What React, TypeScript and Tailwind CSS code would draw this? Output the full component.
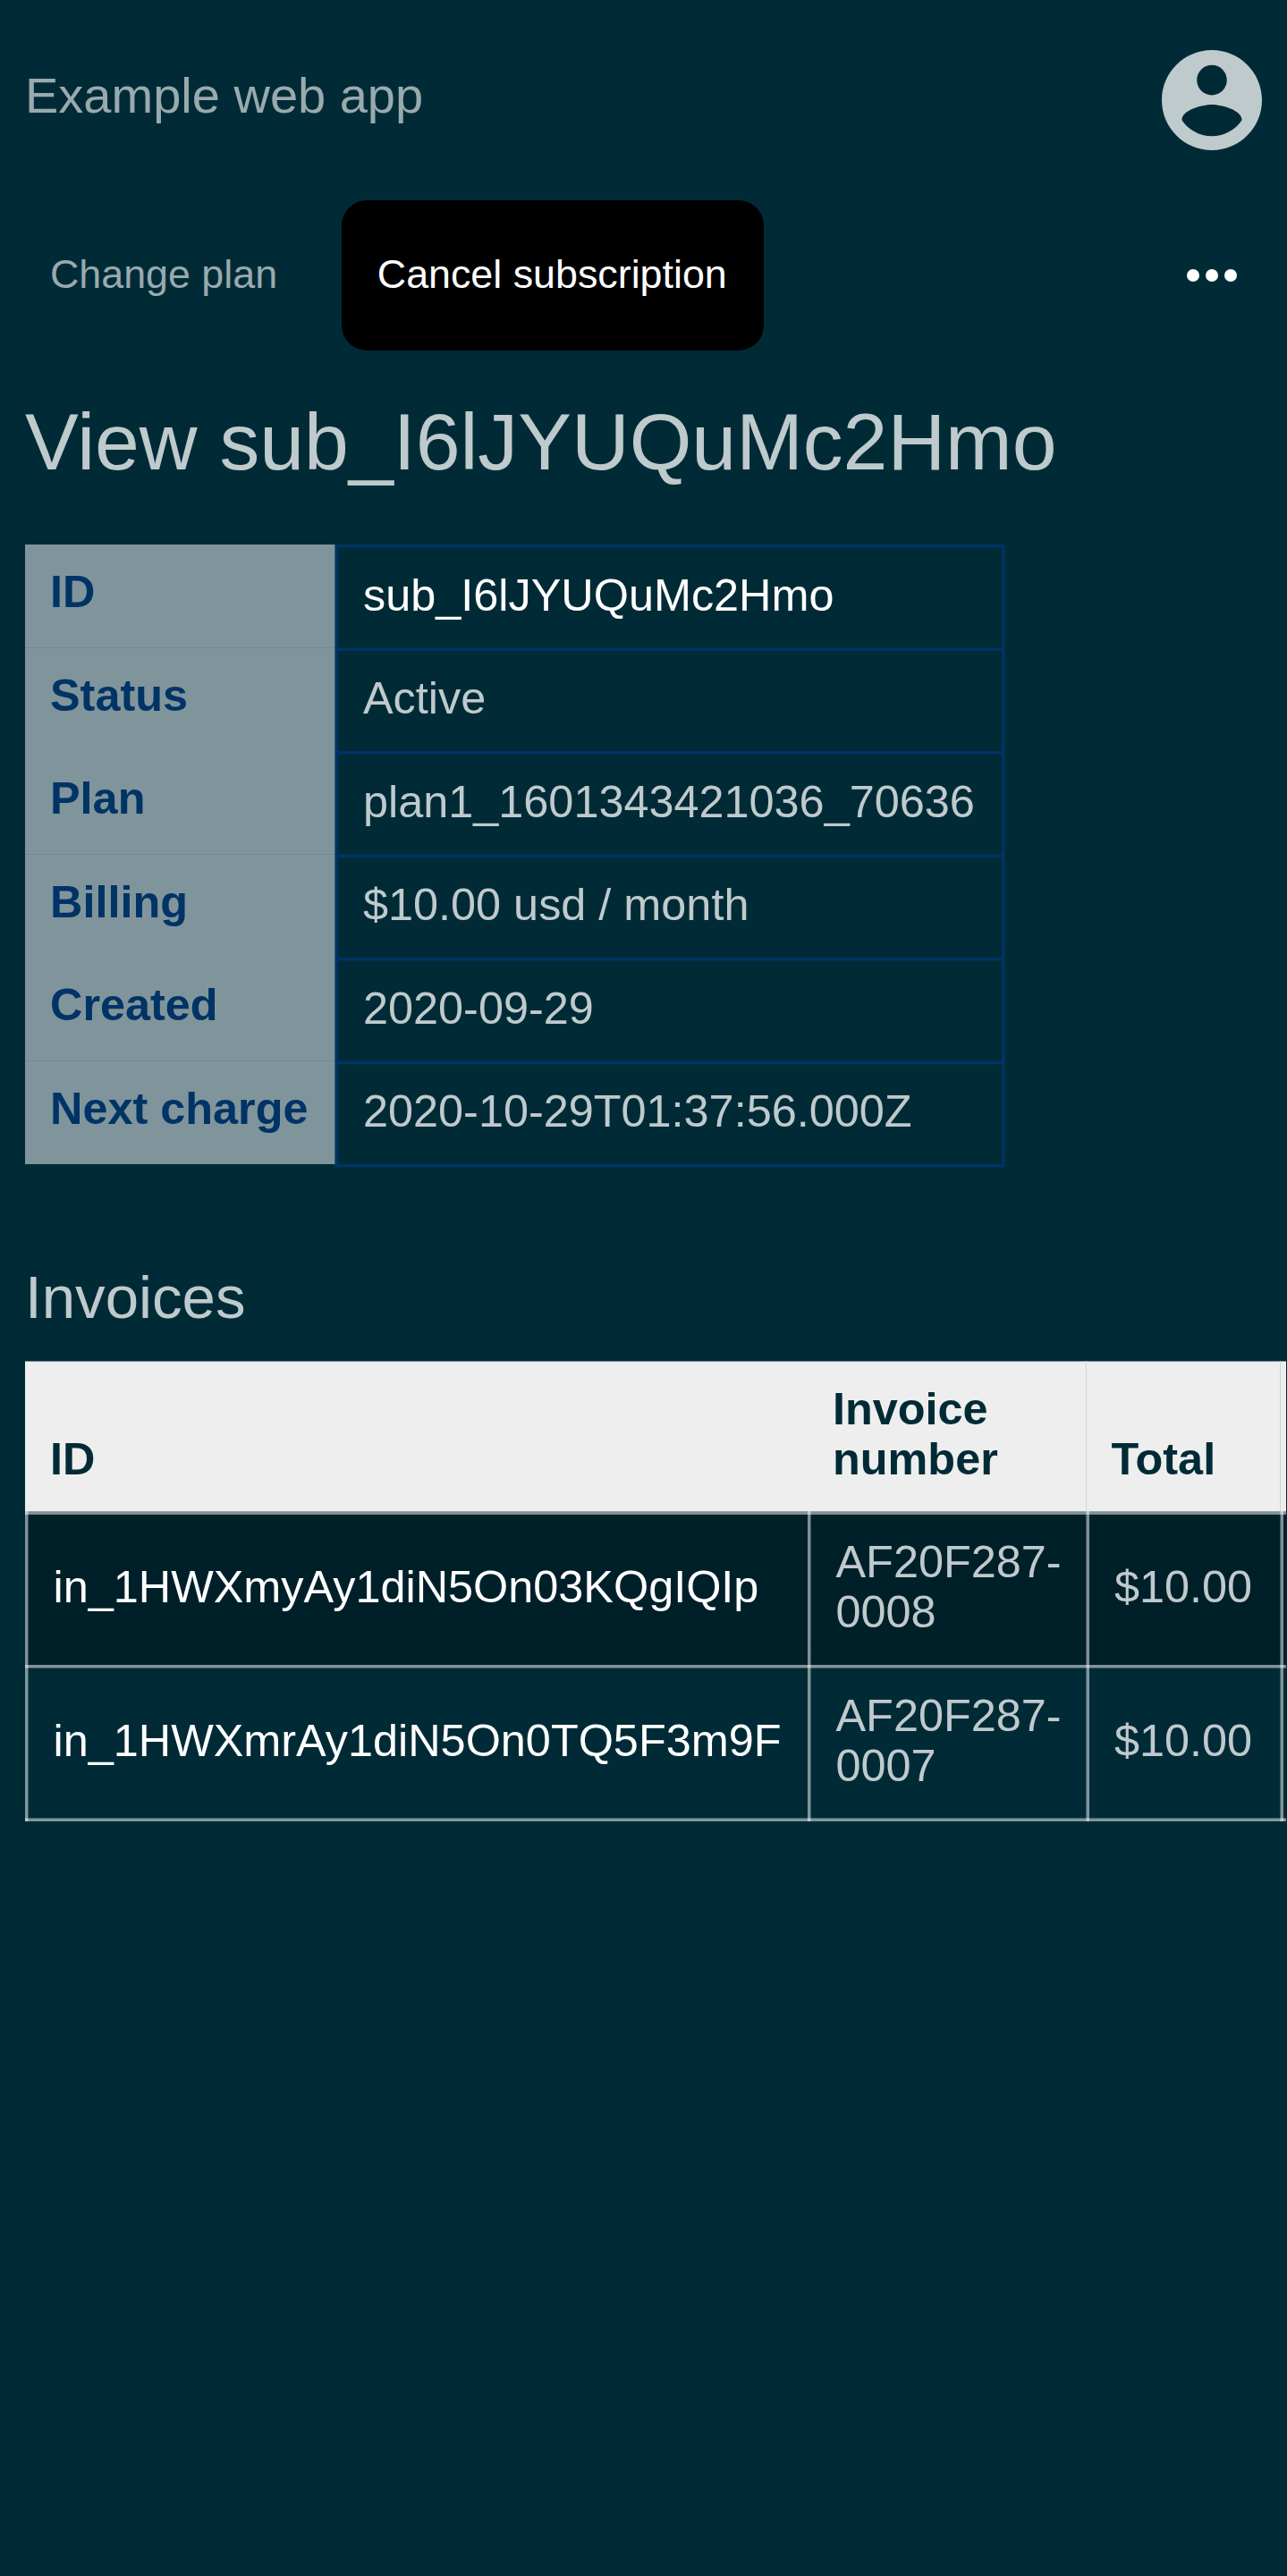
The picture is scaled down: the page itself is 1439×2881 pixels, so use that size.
const details = [
  { label: "ID", value: "sub_I6lJYUQuMc2Hmo", link: true },
  { label: "Status", value: "Active" },
  { label: "Plan", value: "plan1_1601343421036_70636" },
  { label: "Billing", value: "$10.00 usd / month" },
  { label: "Created", value: "2020-09-29" },
  { label: "Next charge", value: "2020-10-29T01:37:56.000Z" },
];

const columns = "grid grid-cols-[875px_311px_217px_7px]";

// Table rules are 3.5px thick: three solid pixels and a half-strength one at the fractional end.
const blueTrailing =
  "bg-[linear-gradient(90deg,#33597a_0_1px,#003366_1px_4px,transparent_4px),linear-gradient(270deg,#002f4e_0_1px,#003366_1px_4px,transparent_4px),linear-gradient(180deg,#003366_0_3px,#002f4e_3px_4px,transparent_4px)]";
const blueLeading =
  "bg-[linear-gradient(90deg,#33597a_0_1px,#003366_1px_4px,transparent_4px),linear-gradient(270deg,#002f4e_0_1px,#003366_1px_4px,transparent_4px),linear-gradient(180deg,#002f4e_0_1px,#003366_1px_4px,transparent_4px)]";

const vTrailing =
  "bg-[linear-gradient(90deg,rgba(255,255,255,0.5)_0_3px,rgba(255,255,255,0.25)_3px_4px,transparent_4px)]";
const vLeading =
  "bg-[linear-gradient(90deg,rgba(255,255,255,0.25)_0_1px,rgba(255,255,255,0.5)_1px_4px,transparent_4px)]";

const invoices = [
  {
    id: "in_1HWXmyAy1diN5On03KQgIQIp",
    number: ["AF20F287-", "0008"],
    total: "$10.00",
    row: "h-[172px] bg-[linear-gradient(180deg,rgba(255,255,255,0.25)_0_1px,rgba(255,255,255,0.5)_1px_4px,transparent_4px),linear-gradient(180deg,#748488_0_1px,#002029_1px)]",
    pad: "pt-[4px] pb-[7px]",
  },
  {
    id: "in_1HWXmrAy1diN5On0TQ5F3m9F",
    number: ["AF20F287-", "0007"],
    total: "$10.00",
    row: "h-[171px] bg-[linear-gradient(180deg,rgba(255,255,255,0.5)_0_3px,rgba(255,255,255,0.25)_3px_4px,transparent_4px)]",
    pad: "pt-[5px] pb-[7px]",
  },
];

export default function App() {
  return (
    <div className="h-[2881px] w-full overflow-hidden bg-[#002b36] font-['Liberation_Sans',Arial,sans-serif] text-[50.4px] leading-[56px] text-[#bfcacd]">
      <header className="flex h-[224px] items-start justify-between px-[28px]">
        <div className="pt-[74.5px] text-[56px] leading-[64px] text-[#99aaaf]">Example web app</div>
        <svg className="mt-[56px] size-[112px]" viewBox="2 2 20 20" fill="#bfcacd">
          <path d="M12 2C6.48 2 2 6.48 2 12s4.48 10 10 10 10-4.48 10-10S17.52 2 12 2zm0 3c1.66 0 3 1.34 3 3s-1.34 3-3 3-3-1.34-3-3 1.34-3 3-3zm0 14.2c-2.5 0-4.71-1.28-6-3.22.03-1.99 4-3.08 6-3.08 1.99 0 5.97 1.09 6 3.08-1.29 1.94-3.5 3.22-6 3.22z" />
        </svg>
      </header>

      <nav className="flex h-[168px] items-center pr-[56.5px] pl-[56px] text-[44.8px] leading-[56px]">
        <a className="w-[325.5px] pb-[3.5px] text-[#99aaaf]">Change plan</a>
        <button className="flex h-full w-[472.5px] items-center whitespace-nowrap rounded-[28px] bg-black pb-[3.5px] pl-[40.3px] text-white">
          Cancel subscription
        </button>
        <svg className="ml-auto h-[14px] w-[56px]" viewBox="0 0 56 14" fill="#fff">
          <circle cx="7" cy="7" r="7" />
          <circle cx="28" cy="7" r="7" />
          <circle cx="49" cy="7" r="7" />
        </svg>
      </nav>

      <h1 className="mt-[46px] ml-[28px] h-[171px] text-[89.6px] leading-[112px]">View sub_I6lJYUQuMc2Hmo</h1>

      <section className="ml-[28px] w-[1096px]">
        {details.map((d, i) => {
          const odd = i % 2 === 1;
          return (
            <div key={d.label} className={odd ? "flex h-[116px]" : "flex h-[115px]"}>
              <div
                className={
                  "w-[346px] bg-[#80959b] pl-[28px] font-bold text-[#003366] " +
                  (odd ? "pt-[25.5px] shadow-[inset_0_1px_0_#728a8f]" : "pt-[24.5px]")
                }
              >
                {d.label}
              </div>
              <div
                className={
                  "flex-1 pt-[28.5px] pl-[32px] " +
                  (odd ? blueLeading : blueTrailing) +
                  (d.link ? " text-white" : "")
                }
              >
                {d.value}
              </div>
            </div>
          );
        })}
        <div className="ml-[346px] h-[4px] bg-[linear-gradient(180deg,#003366_0_3px,#002f4e_3px_4px)]" />
      </section>

      <h2 className="mt-[102.5px] ml-[28px] h-[113.5px] text-[67.2px] leading-[84px]">Invoices</h2>

      <section className="ml-[28px] w-[1410px]">
        <div className={columns + " h-[168px] bg-[linear-gradient(180deg,#778c92_0_1px,#eee_1px)] font-bold text-[#002b36]"}>
          <div className="flex items-end pb-[30.5px] pl-[28px]">ID</div>
          <div className="pt-[25.5px] pl-[28px]">
            Invoice
            <br />
            number
          </div>
          <div className="flex items-end bg-[linear-gradient(90deg,#cdd3d5_0_1px,transparent_1px)] pb-[30.5px] pl-[28.5px]">
            Total
          </div>
          <div className="bg-[linear-gradient(90deg,#cdd3d5_0_1px,transparent_1px)]" />
        </div>
        {invoices.map((inv) => (
          <div key={inv.id} className={columns + " " + inv.row}>
            <div className={"flex items-center pl-[31.5px] text-white " + vTrailing + " " + inv.pad}>{inv.id}</div>
            <div className={"flex items-center pl-[31.5px] " + vTrailing + " " + inv.pad}>
              <span>
                {inv.number[0]}
                <br />
                {inv.number[1]}
              </span>
            </div>
            <div className={"flex items-center pl-[32px] " + vLeading + " " + inv.pad}>{inv.total}</div>
            <div className={vLeading} />
          </div>
        ))}
        <div
          className={
            columns +
            " h-[4px] bg-[linear-gradient(180deg,rgba(255,255,255,0.25)_0_1px,rgba(255,255,255,0.5)_1px_4px)]"
          }
        >
          <div className={vTrailing} />
          <div className={vTrailing} />
          <div className={vLeading} />
          <div className={vLeading} />
        </div>
      </section>
    </div>
  );
}
